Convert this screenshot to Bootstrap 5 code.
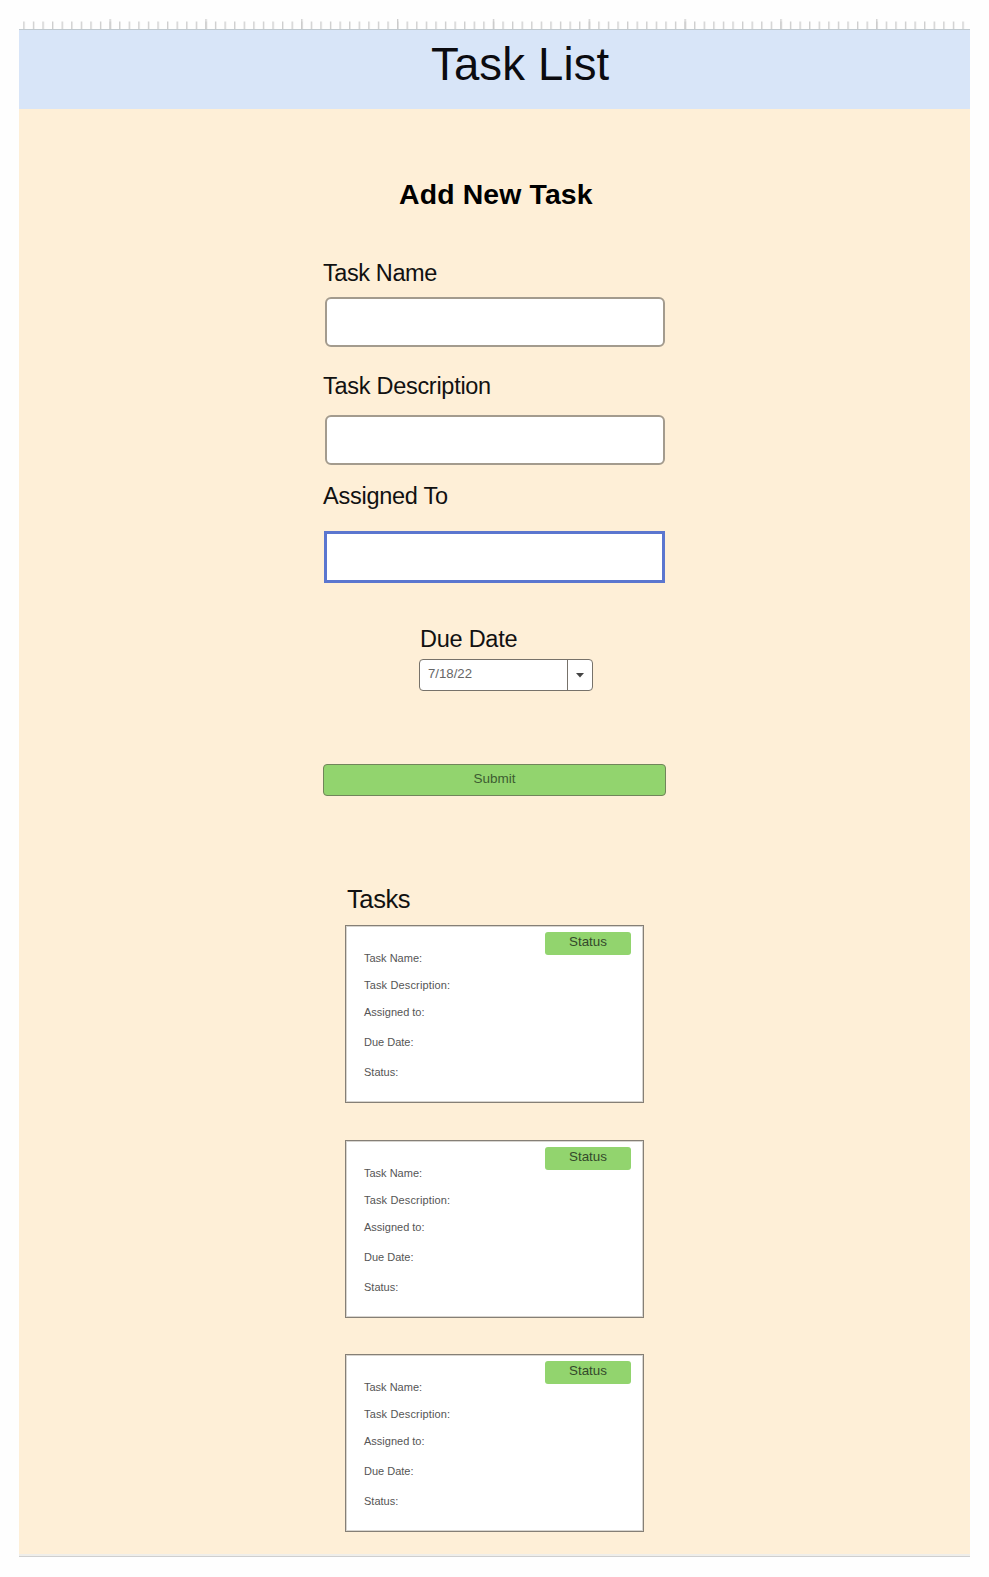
<!DOCTYPE html>
<html lang="en">
<head>
<meta charset="utf-8">
<meta name="viewport" content="width=device-width, initial-scale=1">
<title>Task List</title>
<link href="https://cdn.jsdelivr.net/npm/bootstrap@5.3.0/dist/css/bootstrap.min.css" rel="stylesheet">
<style>
body{font-family:"Liberation Sans",Arial,sans-serif;color:#111;background:#fefefe;line-height:1}
.page-frame{width:951px;margin-left:19px;padding-top:19px}
.ruler{height:10px;display:block}
.page-head{height:80px;background:#d8e5f8;border-top:1px solid #c0c9cf;padding:12px 0 0 412px}
.page-head h1{font-size:45.5px;line-height:1;font-weight:400;margin:0;color:#0b0b10;letter-spacing:.15px}
.canvas-area{height:1448px;background:#feefd7;border-bottom:1px solid #cfcfcf;box-shadow:inset 0 -2px #efeeea;padding-top:71px}
.form-title{font-size:28.4px;line-height:29px;font-weight:700;color:#000;margin:0 0 52px 380px;letter-spacing:.15px}
.task-form{width:343px;margin-left:304px}
.field-label{display:block;font-size:23.5px;line-height:24px;white-space:nowrap;margin:0;letter-spacing:-.25px}
.field-label.l-name{letter-spacing:-.4px}
.field-label.l-desc{letter-spacing:-.28px}
.form-control.field{height:50px;width:340px;margin-left:2px;padding:0 10px;border:2px solid #a39b8e;border-radius:6px;background:#fff}
.form-control.field-active{height:52px;width:341px;margin-left:1px;border:3px solid #5b76cf;border-radius:0}
.date-box{width:174px;height:32px;border:1px solid #77726a;border-radius:4px;margin-left:96px;background:#fff;font-size:13.2px;color:#666}
.date-value{padding:7px 0 0 8px;line-height:13px}
.date-toggle{width:25px;border-left:1px solid #77726a}
.btn.submit-btn{height:32px;width:343px;padding:0 0 2px;font-size:13.5px;line-height:1;color:#3d5c31;background:#92d46e;border:1px solid #71855a;border-radius:4px}
.task-area{width:300px;margin-left:326px}
.task-area h2{font-size:25.5px;line-height:26px;margin:0 0 13px 2px;letter-spacing:-.4px;font-weight:400}
.card.task-card{height:178px;width:299px;border:1px solid #857f76;box-shadow:inset 0 0 0 1px #d8d5d0;border-radius:0;background:#fff;margin-bottom:36px;padding:26px 0 0 18px;font-size:11px;color:#555;line-height:12px}
.card.task-card:first-of-type{margin-bottom:37px}
.task-card>div{height:27px;white-space:nowrap}
.task-card>.tall{height:30px}
.task-card>.wide-text{letter-spacing:.15px}
.badge.status-tag{top:6px;right:12px;width:86px;height:23px;border-radius:3px;background:#92d46e;color:#34492b;font-size:13.4px;font-weight:400;line-height:12px;padding:4px 0 0}
</style>
</head>
<body>
<main class="page-frame">
  <svg class="ruler" width="951" height="10" aria-hidden="true">
    <defs>
      <pattern id="minor" x="4.25" y="0" width="9.583" height="10" patternUnits="userSpaceOnUse"><path d="M.7 2.5V10" stroke="#cbcbcb" stroke-width="1.3"/></pattern>
      <pattern id="major" x="90.5" y="0" width="95.83" height="10" patternUnits="userSpaceOnUse"><path d="M.7 0V10" stroke="#cbcbcb" stroke-width="1.3"/></pattern>
    </defs>
    <rect width="951" height="10" fill="url(#minor)"/>
    <rect width="951" height="10" fill="url(#major)"/>
  </svg>
  <header class="page-head"><h1>Task List</h1></header>
  <div class="canvas-area">
    <h2 class="form-title">Add New Task</h2>
    <form class="task-form">
      <label class="field-label l-name" for="task-name">Task Name</label>
      <input id="task-name" class="form-control field" style="margin-top:12px">
      <label class="field-label l-desc" for="task-desc" style="margin-top:27px">Task Description</label>
      <input id="task-desc" class="form-control field" style="margin-top:17px">
      <label class="field-label" for="assigned" style="margin-top:19px">Assigned To</label>
      <input id="assigned" class="form-control field field-active" style="margin-top:23px">
      <label class="field-label" style="margin:44px 0 8px 97px">Due Date</label>
      <div class="date-box d-flex">
        <span class="date-value flex-grow-1">7/18/22</span>
        <span class="date-toggle d-flex align-items-center justify-content-center">
          <svg width="8" height="5" aria-hidden="true"><path d="M0 0H8L4 4.5Z" fill="#444"/></svg>
        </span>
      </div>
      <button type="button" class="btn submit-btn d-block" style="margin-top:73px">Submit</button>
    </form>
    <section class="task-area" style="margin-top:90px">
      <h2>Tasks</h2>
      <article class="card task-card">
        <span class="badge status-tag position-absolute">Status</span>
        <div>Task Name:</div><div class="wide-text">Task Description:</div><div class="tall">Assigned to:</div><div class="tall">Due Date:</div><div>Status:</div>
      </article>
      <article class="card task-card">
        <span class="badge status-tag position-absolute">Status</span>
        <div>Task Name:</div><div class="wide-text">Task Description:</div><div class="tall">Assigned to:</div><div class="tall">Due Date:</div><div>Status:</div>
      </article>
      <article class="card task-card">
        <span class="badge status-tag position-absolute">Status</span>
        <div>Task Name:</div><div class="wide-text">Task Description:</div><div class="tall">Assigned to:</div><div class="tall">Due Date:</div><div>Status:</div>
      </article>
    </section>
  </div>
</main>
<script src="https://cdn.jsdelivr.net/npm/bootstrap@5.3.0/dist/js/bootstrap.bundle.min.js"></script>
</body>
</html>
